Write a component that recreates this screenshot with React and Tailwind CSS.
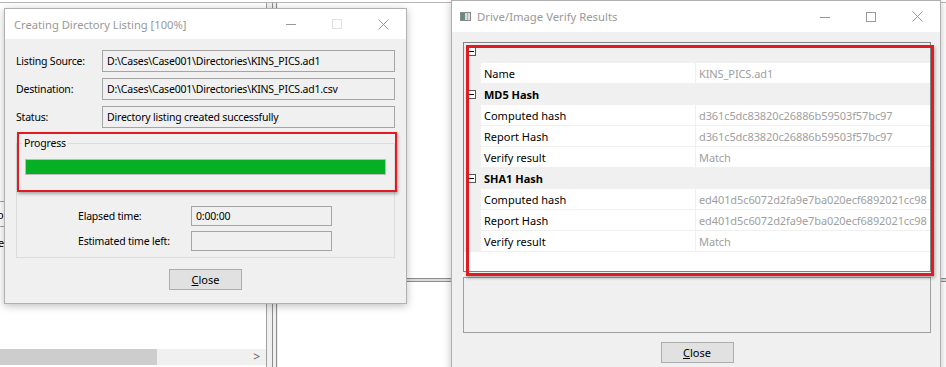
import React from "react";

const TitleButtons = ({ maxDisabled }) => (
  <div className="flex h-full">
    <div className="flex w-[46px] items-center justify-center">
      <svg width="10" height="10" viewBox="0 0 10 10">
        <path d="M0 5.5h10" stroke="#999" strokeWidth="1" />
      </svg>
    </div>
    <div className="flex w-[46px] items-center justify-center">
      <svg width="10" height="10" viewBox="0 0 10 10">
        <rect x="0.5" y="0.5" width="9" height="9" fill="none" stroke={maxDisabled ? "#e0e0e0" : "#999"} />
      </svg>
    </div>
    <div className="flex w-[46px] items-center justify-center">
      <svg width="11" height="11" viewBox="0 0 11 11">
        <path d="M0.5 0.5l10 10M10.5 0.5l-10 10" stroke="#999" strokeWidth="1" />
      </svg>
    </div>
  </div>
);

const CloseButton = ({ className = "" }) => (
  <button className={`h-[21px] w-[73px] border border-[#adadad] bg-[#e1e1e1] text-black ${className}`}>
    <span className="underline">C</span>lose
  </button>
);

const Field = ({ children, className = "" }) => (
  <div className={`flex items-center border border-[#a5a5a5] bg-[#f0f0f0] px-[4px] ${className}`}>
    {children}
  </div>
);

const Minus = () => (
  <svg width="9" height="9" viewBox="0 0 9 9">
    <rect x="0.5" y="0.5" width="8" height="8" fill="#fff" stroke="#555" />
    <path d="M2 4.5h5" stroke="#000" />
  </svg>
);

const hashRows = [
  { type: "cat", name: "" },
  { type: "prop", name: "Name", value: "KINS_PICS.ad1" },
  { type: "cat", name: "MD5 Hash" },
  { type: "prop", name: "Computed hash", value: "d361c5dc83820c26886b59503f57bc97" },
  { type: "prop", name: "Report Hash", value: "d361c5dc83820c26886b59503f57bc97" },
  { type: "prop", name: "Verify result", value: "Match" },
  { type: "cat", name: "SHA1 Hash" },
  { type: "prop", name: "Computed hash", value: "ed401d5c6072d2fa9e7ba020ecf6892021cc98" },
  { type: "prop", name: "Report Hash", value: "ed401d5c6072d2fa9e7ba020ecf6892021cc98" },
  { type: "prop", name: "Verify result", value: "Match" },
];

export default function App() {
  return (
    <div className="relative h-[367px] w-[946px] overflow-hidden bg-white font-['Noto_Sans',sans-serif] text-[11px] leading-[15px] text-black">
      {/* desktop / app behind */}
      <div className="flex h-full pt-[2px]">
        <div className="flex h-full w-full border-t border-[#b4b4b4]">
          {/* left pane */}
          <div className="flex h-full w-[267px] flex-col border-r border-[#a0a0a0]">
            <div className="mt-[198px] flex h-[26px] w-[6px] items-center overflow-hidden border-y border-[#a0a0a0]">
              <span className="-ml-[3px]">o</span>
            </div>
            <div className="mt-[8px] w-[6px] overflow-hidden">
              <span className="-ml-[2px]">e</span>
            </div>
            <div className="mt-auto mb-[2px] flex h-[16px] items-center bg-[#f0f0f0]">
              <div className="h-full w-[157px] bg-[#cdcdcd]" />
              <div className="ml-auto mr-[6px] text-[12px] leading-none text-[#606060]">&gt;</div>
            </div>
          </div>
          {/* splitter */}
          <div className="flex h-full w-[11px] bg-[#f0f0f0]">
            <div className="ml-[5px] h-full w-[1px] bg-[#8c8c8c]" />
            <div className="ml-[3px] h-full w-[1px] bg-[#8c8c8c]" />
          </div>
          {/* right pane */}
          <div className="flex h-full flex-1 flex-col">
            <div className="mt-[275px] h-[4px] border-y border-[#8c8c8c] bg-[#dcdcdc]" />
          </div>
        </div>
      </div>

      {/* left dialog */}
      <div className="absolute left-[4px] top-[8px] w-[403px] border border-[#b0b0b0] bg-[#f0f0f0] text-[10.5px] tracking-[-0.2px] shadow-[0_2px_8px_rgba(0,0,0,0.25)]">
        <div className="flex h-[30px] items-center bg-white">
          <span className="ml-[9px] text-[11.2px] tracking-normal text-[#999]">Creating Directory Listing [100%]</span>
          <div className="ml-auto h-full">
            <TitleButtons maxDisabled />
          </div>
        </div>
        <div className="flex flex-col px-[11px] pt-[11px] pb-[13px]">
          <div className="flex flex-col gap-[6px]">
            {[
              ["Listing Source:", "D:\\Cases\\Case001\\Directories\\KINS_PICS.ad1"],
              ["Destination:", "D:\\Cases\\Case001\\Directories\\KINS_PICS.ad1.csv"],
              ["Status:", "Directory listing created successfully"],
            ].map(([label, value]) => (
              <div key={label} className="flex h-[22px] items-center">
                <span className="w-[86px]">{label}</span>
                <Field className="h-full w-[293px]">{value}</Field>
              </div>
            ))}
          </div>

          <fieldset className="mt-[8px] border border-[#dcdcdc] px-[8px] pb-[6px]">
            <legend className="-ml-[3px] px-[2px]">Progress</legend>
            <div className="mt-[8px] h-[16px] w-[361px] border border-[#bcbcbc] bg-[#e6e6e6]">
              <div className="h-full w-full bg-[#06b025]" />
            </div>
            <div className="mt-[31px] flex flex-col gap-[5px] pl-[53px]">
              <div className="flex h-[20px] items-center">
                <span className="w-[113px]">Elapsed time:</span>
                <Field className="h-full w-[141px]">0:00:00</Field>
              </div>
              <div className="flex h-[20px] items-center">
                <span className="w-[113px]">Estimated time left:</span>
                <Field className="h-full w-[141px]" />
              </div>
            </div>
          </fieldset>

          <div className="mt-[11px] flex justify-center">
            <CloseButton className="text-[11px] tracking-normal" />
          </div>
        </div>
      </div>

      {/* annotation over progress */}
      <div className="absolute left-[17px] top-[132px] h-[60px] w-[380px] border-2 border-[#e01b22] shadow-[1px_2px_3px_rgba(0,0,0,0.3)]" />

      {/* right dialog */}
      <div className="absolute left-[451px] top-0 h-[380px] w-[490px] border border-[#b0b0b0] bg-[#f0f0f0] shadow-[0_2px_8px_rgba(0,0,0,0.25)]">
        <div className="flex h-[31px] items-center bg-white">
          <svg className="ml-[8px]" width="11" height="9" viewBox="0 0 11 9">
            <rect x="0.5" y="0.5" width="10" height="8" fill="#dcdcdc" stroke="#8a8a8a" />
            <rect x="1" y="1" width="4" height="7" fill="#5d8f84" />
            <path d="M7.5 1v7" stroke="#b0b0b0" />
          </svg>
          <span className="ml-[6px] text-[11.3px] text-[#999]">Drive/Image Verify Results</span>
          <div className="ml-auto h-full">
            <TitleButtons />
          </div>
        </div>
        <div className="flex flex-col pl-[11px] pr-[9px] pt-[10px]">
          <div className="flex h-[230px] flex-col border border-[#828282] bg-white">
            {hashRows.map((row, i) =>
              row.type === "cat" ? (
                <div key={i} className={`flex items-center bg-[#f0f0f0] ${i === 0 ? "h-[20px]" : "h-[21px]"}`}>
                  <div className={`flex w-[17px] pl-[3px] ${i === 0 ? "items-start self-stretch pt-[4px]" : "items-center"}`}>
                    <Minus />
                  </div>
                  <span className="pl-[3px] font-bold">{row.name}</span>
                </div>
              ) : (
                <div key={i} className="flex h-[21px]">
                  <div className="w-[17px] bg-[#f0f0f0]" />
                  <div className="flex w-[215px] items-center border-b border-r border-[#f0f0f0] pl-[3px]">
                    {row.name}
                  </div>
                  <div className="flex flex-1 items-center overflow-hidden whitespace-nowrap border-b border-[#f0f0f0] pl-[3px] tracking-[-0.1px] text-[#a0a0a0]">
                    {row.value}
                  </div>
                </div>
              )
            )}
          </div>
          <div className="mt-[5px] h-[56px] border border-[#a0a0a0] bg-[#f0f0f0]" />
          <div className="mt-[9px] flex justify-center">
            <CloseButton />
          </div>
        </div>
      </div>

      {/* annotation over grid */}
      <div className="absolute left-[466px] top-[45px] h-[231px] w-[468px] border-[3px] border-[#e01b22] shadow-[1px_2px_3px_rgba(0,0,0,0.3)]" />
    </div>
  );
}
